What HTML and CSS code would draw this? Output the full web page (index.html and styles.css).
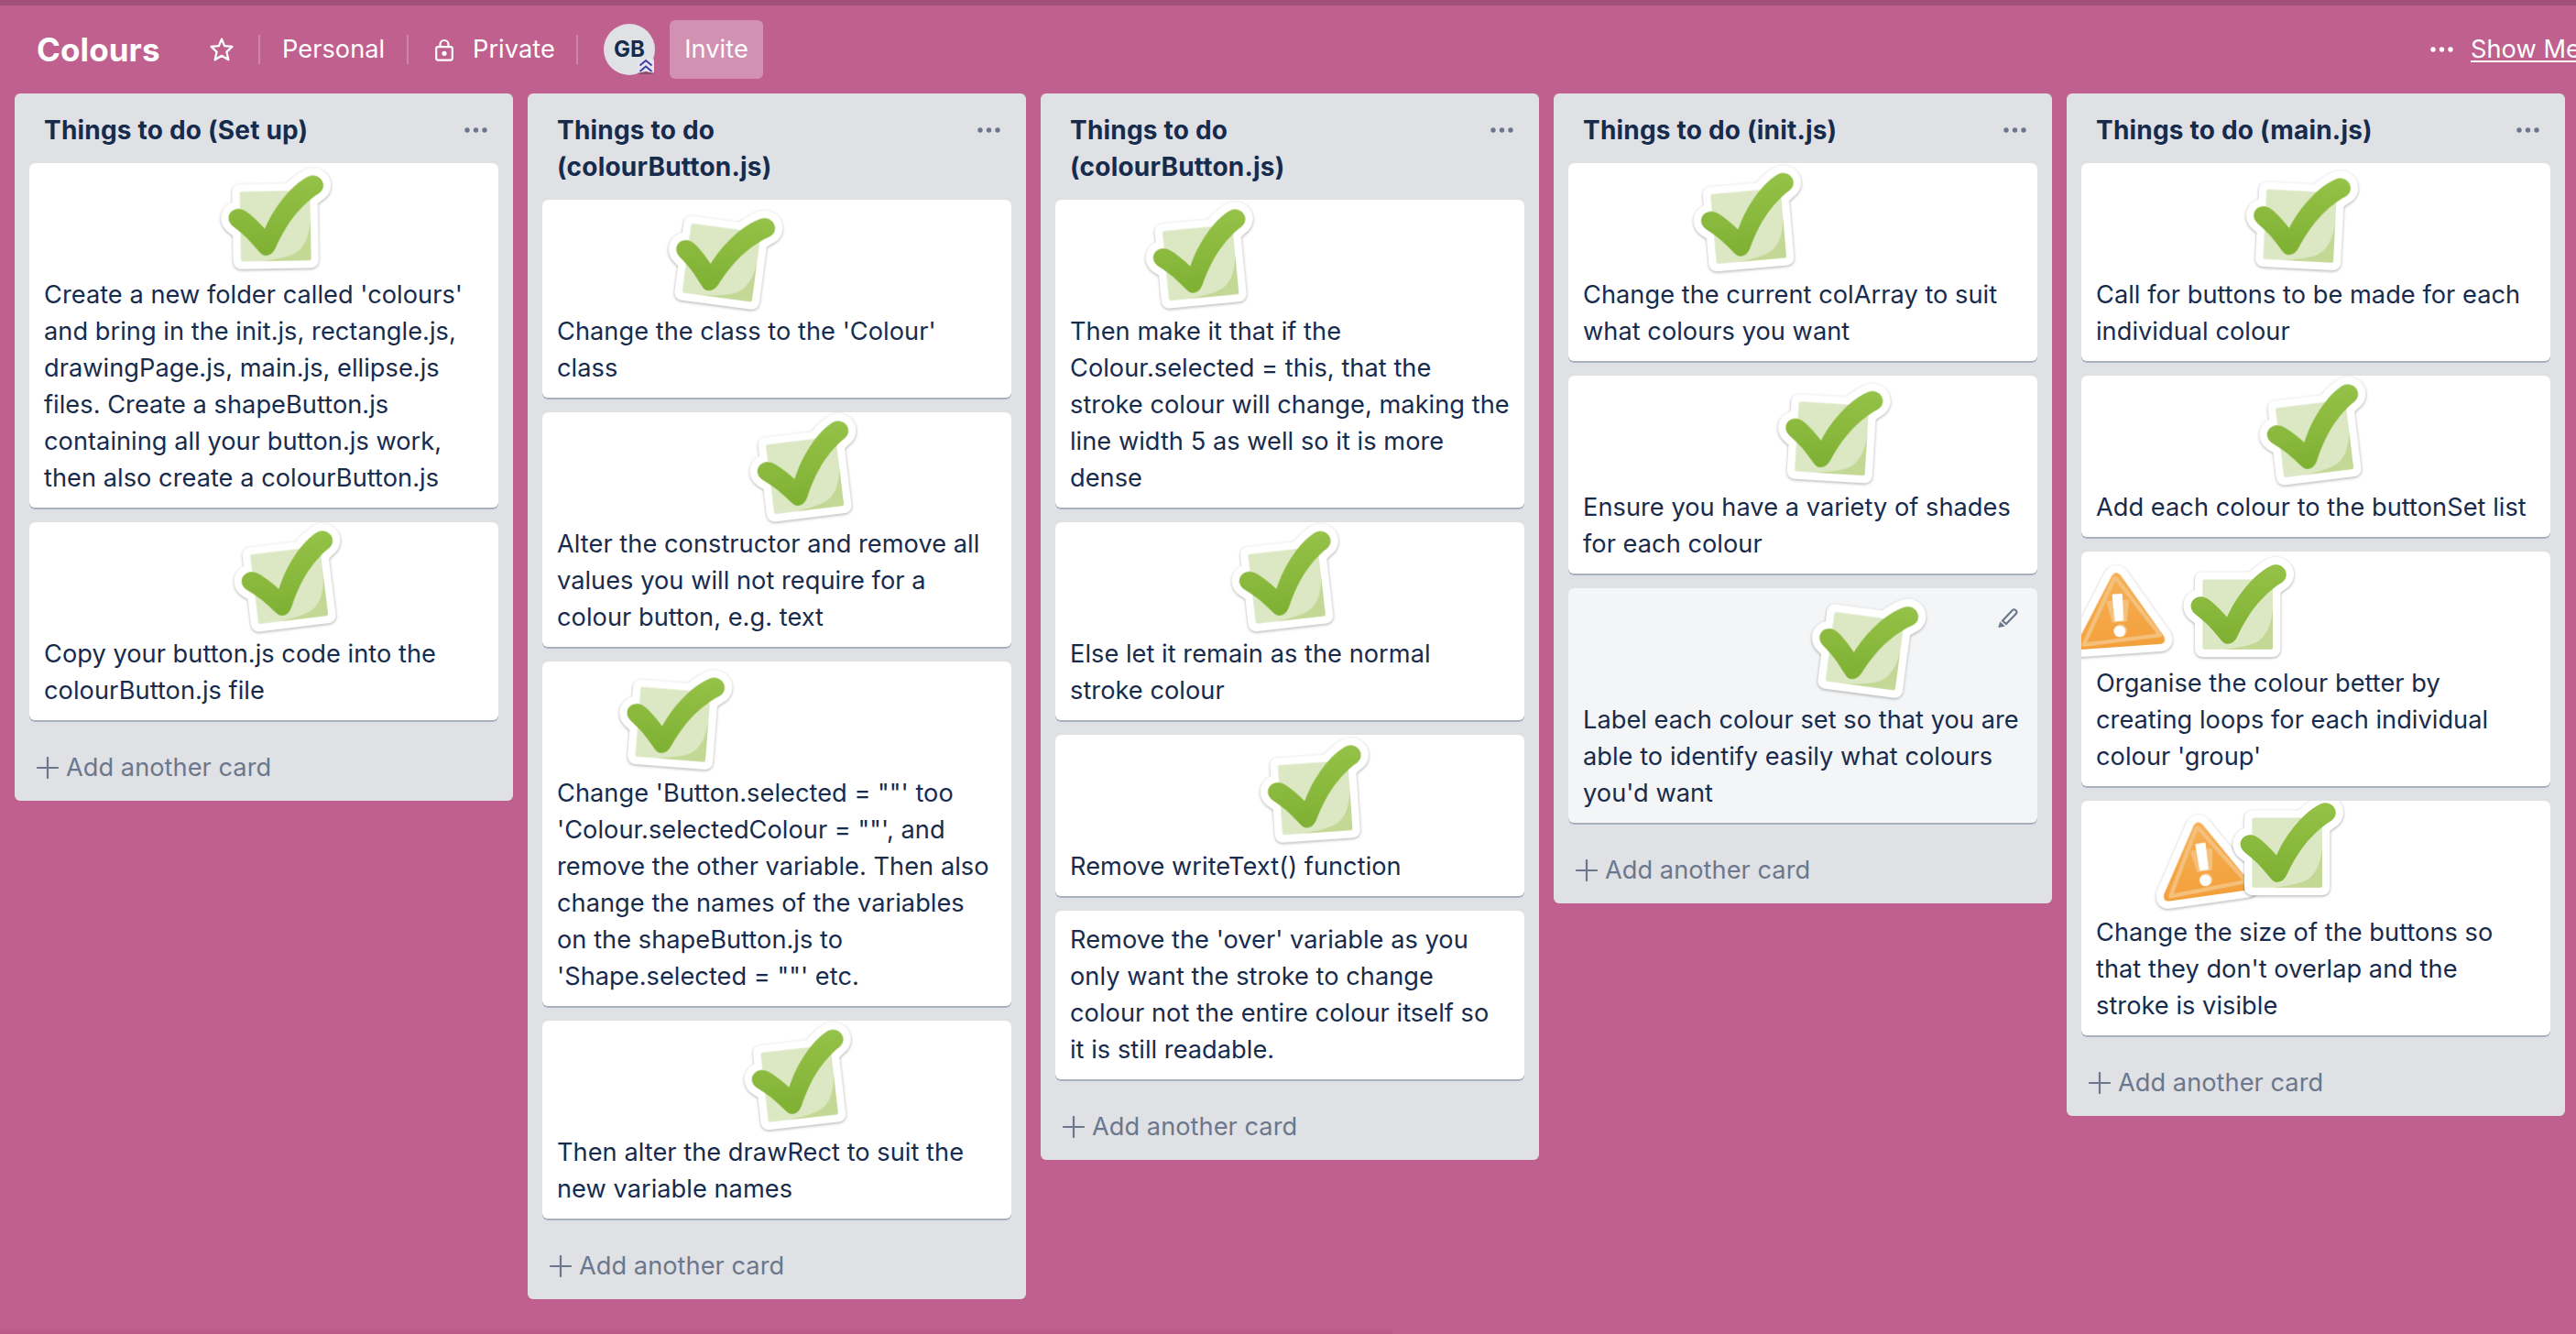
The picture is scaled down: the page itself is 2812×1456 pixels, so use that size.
FILE: index.html
```
<!DOCTYPE html>
<html lang="en">
<head>
<meta charset="utf-8">
<title>Colours</title>
<link rel="stylesheet" href="styles.css">
</head>
<body>
<svg class="defs" aria-hidden="true">
  <defs>
    <linearGradient id="green" x1="0" y1="0" x2="0" y2="1"><stop offset="0" stop-color="#95c248"/><stop offset="1" stop-color="#7eb033"/></linearGradient>
    <linearGradient id="orange" x1="0" y1="0" x2="0" y2="1"><stop offset="0" stop-color="#f5b057"/><stop offset="1" stop-color="#f3a03b"/></linearGradient>
    <path id="tick" d="M485 183C500 183 510 190 522 200C540 216 556 232 572 250C590 210 612 176 640 144C664 117 690 95 716 82C748 66 778 100 762 126C757 134 750 138 742 143C700 172 668 208 642 248C628 270 616 292 606 314C598 330 588 338 575 338C562 338 556 330 548 320C525 290 500 264 468 240C440 216 458 184 485 183Z"/>
    <path id="tri" d="M-14 -114Q0 -130 14 -114L142 96Q150 120 128 121H-128Q-150 120 -142 96Z"/>
    <symbol id="check" viewBox="-200 -200 400 400">
      <g transform="translate(-607 -241.5)">
        <g fill="#fff" stroke="#fff" stroke-width="50" stroke-linejoin="round"><rect x="492" y="127" width="230" height="229"/><use href="#tick"/></g>
        <rect x="492" y="127" width="230" height="229" rx="6" fill="#dce8c3"/>
        <path d="M722 222C718 270 704 312 670 332C640 346 600 352 560 356H716Q722 356 722 350Z" fill="#c4d896"/>
        <use href="#tick" fill="url(#green)"/>
      </g>
    </symbol>
    <symbol id="warning" viewBox="-200 -200 400 400">
      <use href="#tri" fill="#fff" stroke="#fff" stroke-width="50" stroke-linejoin="round"/>
      <use href="#tri" fill="url(#orange)"/>
      <path d="M-8 -102Q-2 -106 4 -96L130 92L-122 106Z" fill="none" stroke="#f5c07c" stroke-width="13" stroke-linejoin="round"/>
      <path d="M-38 -31L36 -31L25 40H-24Z" fill="#f5c07c"/>
      <circle cx="2" cy="68" r="21" fill="#f5c07c"/>
      <path d="M-18 -52H16L14 36H-15Z" fill="#fff"/>
      <circle cx="-1.5" cy="70" r="19" fill="#fff"/>
    </symbol>
    <symbol id="dots" viewBox="0 0 26 6"><circle cx="3" cy="3" r="2.7"/><circle cx="12.5" cy="3" r="2.7"/><circle cx="22" cy="3" r="2.7"/></symbol>
    <symbol id="plus" viewBox="0 0 24 24"><path d="M12 1V23M1 12H23" fill="none" stroke="currentColor" stroke-width="2.2" stroke-linecap="round"/></symbol>
  </defs>
</svg>

<header class="bar">
  <h1 class="board-name">Colours</h1>
  <svg class="star" viewBox="0 0 28 28"><path d="M14 2.6L17.2 10.2L25.4 10.9L19.4 16.6L21.3 25.2L14 20.8L6.7 25.2L8.6 16.6L2.6 10.9L10.8 10.2Z" fill="none" stroke="#fff" stroke-width="2.3" stroke-linejoin="round"/></svg>
  <i class="rule"></i>
  <span class="bar-text personal">Personal</span>
  <i class="rule"></i>
  <svg class="lock" viewBox="0 0 20 25"><path d="M5.5 9V6.5a4.5 4.5 0 0 1 9 0V9" fill="none" stroke="#fff" stroke-width="2.2"/><rect x="1.2" y="9.2" width="17.6" height="14.4" rx="2" fill="none" stroke="#fff" stroke-width="2.2"/><circle cx="10" cy="16.3" r="2.6" fill="#fff"/></svg>
  <span class="bar-text private">Private</span>
  <i class="rule"></i>
  <span class="avatar">GB
    <svg class="admin" viewBox="0 0 18 18"><rect x="0.5" y="2" width="17" height="15" rx="2" fill="#8a4a6b"/><path d="M2 0H16Q18 0 18 2V14Q18 15.500 16 15.500L9 14L2 15.500Q0 15.500 0 14V2Q0 0 2 0Z" fill="#e6e4ec"/><path d="M2.500 7.500L9 2L15.500 7.500M2.500 14L9 8.500L15.500 14" fill="none" stroke="#3b3fae" stroke-width="1.900"/></svg>
  </span>
  <span class="invite">Invite</span>
  <svg class="more"><use href="#dots"/></svg>
  <a class="show-menu">Show Menu</a>
</header>

<main class="board">
  <section class="list">
    <div class="list-head"><h2>Things to do (Set up)</h2><svg class="dots"><use href="#dots"/></svg></div>
    <article class="card stickered"><svg class="sticker" style="--x:268.8px;--y:69px;--r:-1deg"><use href="#check"/></svg><p>Create a new folder called 'colours'<br>and bring in the init.js, rectangle.js,<br>drawingPage.js, main.js, ellipse.js<br>files. Create a shapeButton.js<br>containing all your button.js work,<br>then also create a colourButton.js</p></article>
    <article class="card stickered"><svg class="sticker" style="--x:283.3px;--y:68.8px;--r:-7deg"><use href="#check"/></svg><p>Copy your button.js code into the<br>colourButton.js file</p></article>
    <div class="add"><svg class="plus"><use href="#plus"/></svg>Add another card</div>
  </section>

  <section class="list">
    <div class="list-head"><h2>Things to do<br>(colourButton.js)</h2><svg class="dots"><use href="#dots"/></svg></div>
    <article class="card stickered"><svg class="sticker" style="--x:195.3px;--y:68.5px;--r:7.5deg"><use href="#check"/></svg><p>Change the class to the 'Colour'<br>class</p></article>
    <article class="card stickered"><svg class="sticker" style="--x:287.1px;--y:69px;--r:-7deg"><use href="#check"/></svg><p>Alter the constructor and remove all<br>values you will not require for a<br>colour button, e.g. text</p></article>
    <article class="card stickered"><svg class="sticker" style="--x:142.4px;--y:68.8px;--r:4.5deg"><use href="#check"/></svg><p>Change 'Button.selected = ""' too<br>'Colour.selectedColour = ""', and<br>remove the other variable. Then also<br>change the names of the variables<br>on the shapeButton.js to<br>'Shape.selected = ""' etc.</p></article>
    <article class="card stickered"><svg class="sticker" style="--x:281px;--y:68.3px;--r:-6.5deg"><use href="#check"/></svg><p>Then alter the drawRect to suit the<br>new variable names</p></article>
    <div class="add"><svg class="plus"><use href="#plus"/></svg>Add another card</div>
  </section>

  <section class="list">
    <div class="list-head"><h2>Things to do<br>(colourButton.js)</h2><svg class="dots"><use href="#dots"/></svg></div>
    <article class="card stickered"><svg class="sticker" style="--x:158.3px;--y:68.8px;--r:-5.5deg"><use href="#check"/></svg><p>Then make it that if the<br>Colour.selected = this, that the<br>stroke colour will change, making the<br>line width 5 as well so it is more<br>dense</p></article>
    <article class="card stickered"><svg class="sticker" style="--x:252.9px;--y:69px;--r:-6.5deg"><use href="#check"/></svg><p>Else let it remain as the normal<br>stroke colour</p></article>
    <article class="card stickered"><svg class="sticker" style="--x:283.3px;--y:68.3px;--r:-4deg"><use href="#check"/></svg><p>Remove writeText() function</p></article>
    <article class="card"><p>Remove the 'over' variable as you<br>only want the stroke to change<br>colour not the entire colour itself so<br>it is still readable.</p></article>
    <div class="add"><svg class="plus"><use href="#plus"/></svg>Add another card</div>
  </section>

  <section class="list">
    <div class="list-head"><h2>Things to do (init.js)</h2><svg class="dots"><use href="#dots"/></svg></div>
    <article class="card stickered"><svg class="sticker" style="--x:196.5px;--y:68.7px;--r:-5deg"><use href="#check"/></svg><p>Change the current colArray to suit<br>what colours you want</p></article>
    <article class="card stickered"><svg class="sticker" style="--x:287.6px;--y:68.5px;--r:3.5deg"><use href="#check"/></svg><p>Ensure you have a variety of shades<br>for each colour</p></article>
    <article class="card stickered hovered"><svg class="sticker" style="--x:323.9px;--y:68.5px;--r:7.5deg"><use href="#check"/></svg><svg class="pencil" viewBox="0 0 24 24"><path d="M6 15.500L16.600 4.300Q18.500 2.300 20.500 4.200Q22.500 6 20.600 8L10 19Z" fill="none" stroke="#6b778c" stroke-width="2.2"/><path d="M3.300 16.500L8.800 21.500L2 23Q1.200 23 1.500 22Z" fill="#6b778c"/></svg><p>Label each colour set so that you are<br>able to identify easily what colours<br>you'd want</p></article>
    <div class="add"><svg class="plus"><use href="#plus"/></svg>Add another card</div>
  </section>

  <section class="list">
    <div class="list-head"><h2>Things to do (main.js)</h2><svg class="dots"><use href="#dots"/></svg></div>
    <article class="card stickered"><svg class="sticker" style="--x:238.3px;--y:68.7px;--r:3deg"><use href="#check"/></svg><p>Call for buttons to be made for each<br>individual colour</p></article>
    <article class="card stickered"><svg class="sticker" style="--x:254.8px;--y:69px;--r:-7deg"><use href="#check"/></svg><p>Add each colour to the buttonSet list</p></article>
    <article class="card stickered"><svg class="sticker" style="--x:40.8px;--y:63.7px;--r:-4deg"><use href="#warning"/></svg><svg class="sticker" style="--x:170.3px;--y:68.5px;--r:0deg"><use href="#check"/></svg><p>Organise the colour better by<br>creating loops for each individual<br>colour 'group'</p></article>
    <article class="card stickered"><svg class="sticker" style="--x:133px;--y:63.7px;--r:-8deg"><use href="#warning"/></svg><svg class="sticker" style="--x:224.3px;--y:56.5px;--r:0deg"><use href="#check"/></svg><p>Change the size of the buttons so<br>that they don't overlap and the<br>stroke is visible</p></article>
    <div class="add"><svg class="plus"><use href="#plus"/></svg>Add another card</div>
  </section>
</main>
</body>
</html>
```
FILE: styles.css
```
* { box-sizing: border-box; }
body {
  margin: 0;
  width: 2812px;
  height: 1456px;
  overflow: hidden;
  background: linear-gradient(#b5588500, #b0568288) 0 100% / 1520px 7px no-repeat, #bf608e;
  border-top: 6px solid #a25278;
  font: 400 27.2px/40px Inter, "Liberation Sans", sans-serif;
  letter-spacing: 0.04px;
  color: #172b4d;
}
h1, h2, p { margin: 0; }
.defs { position: absolute; width: 0; height: 0; }

/* board header */
.bar { height: 96px; display: flex; align-items: center; color: #fff; white-space: nowrap; padding-left: 40px; }
.board-name { width: 188px; font-size: 35px; font-weight: 700; letter-spacing: 0.1px; }
.star { width: 28px; height: 28px; margin-right: 26px; flex: none; }
.rule { width: 2px; height: 32px; background: #ffffff3d; flex: none; }
.personal { width: 160px; padding-left: 24px; }
.lock { width: 20px; height: 25px; margin: 0 21px 0 29px; flex: none; }
.private { width: 113px; }
.avatar {
  position: relative;
  width: 56px;
  height: 56px;
  margin: 0 16px 0 28px;
  border-radius: 50%;
  background: #dfe1e5;
  color: #172b4d;
  font-size: 24px;
  font-weight: 700;
  line-height: 55px;
  text-align: center;
  flex: none;
}
.admin { position: absolute; right: 1px; bottom: 0; width: 18px; height: 18px; }
.invite { width: 102px; height: 64px; line-height: 64px; border-radius: 6px; background: #d290b2; text-align: center; flex: none; }
.more { width: 26px; height: 6px; margin: 0 18px 0 auto; fill: #fff; flex: none; }
.show-menu { width: 115px; text-decoration: underline; text-decoration-thickness: 2px; text-underline-offset: 3px; flex: none; }

/* lists */
.board { display: flex; gap: 16px; align-items: flex-start; padding-left: 16px; }
.list { width: 544px; flex: none; padding: 0 16px; border-radius: 6px; background: #dfe1e5; display: flex; flex-direction: column; gap: 16px; }
.list-head { display: flex; justify-content: space-between; padding: 20px 11px 0 16px; }
.list-head h2 { font-size: 28px; font-weight: 700; line-height: 40px; letter-spacing: 0.2px; }
.dots { width: 26px; height: 6px; margin-top: 17px; fill: #6b778c; }
.card {
  position: relative;
  padding: 12px 16px;
  border-radius: 6px;
  background: #fff;
  box-shadow: 0 2px 0 #a7b0be;
  clip-path: inset(0 0 -2px 0 round 6px);
  white-space: nowrap;
}
.stickered { padding-top: 124px; }
.hovered { background: #f4f5f7; }
.sticker {
  position: absolute;
  left: calc(var(--x) - 66.667px);
  top: calc(var(--y) - 66.667px);
  width: 133.333px;
  height: 133.333px;
  transform: rotate(var(--r));
  filter: drop-shadow(0 1px 1.5px #00000059);
}
.pencil { position: absolute; right: 20px; top: 20px; width: 24px; height: 24px; }
.add { display: flex; align-items: center; height: 72px; padding-left: 8px; gap: 8px; color: #6b778c; }
.plus { width: 24px; height: 24px; }
```
